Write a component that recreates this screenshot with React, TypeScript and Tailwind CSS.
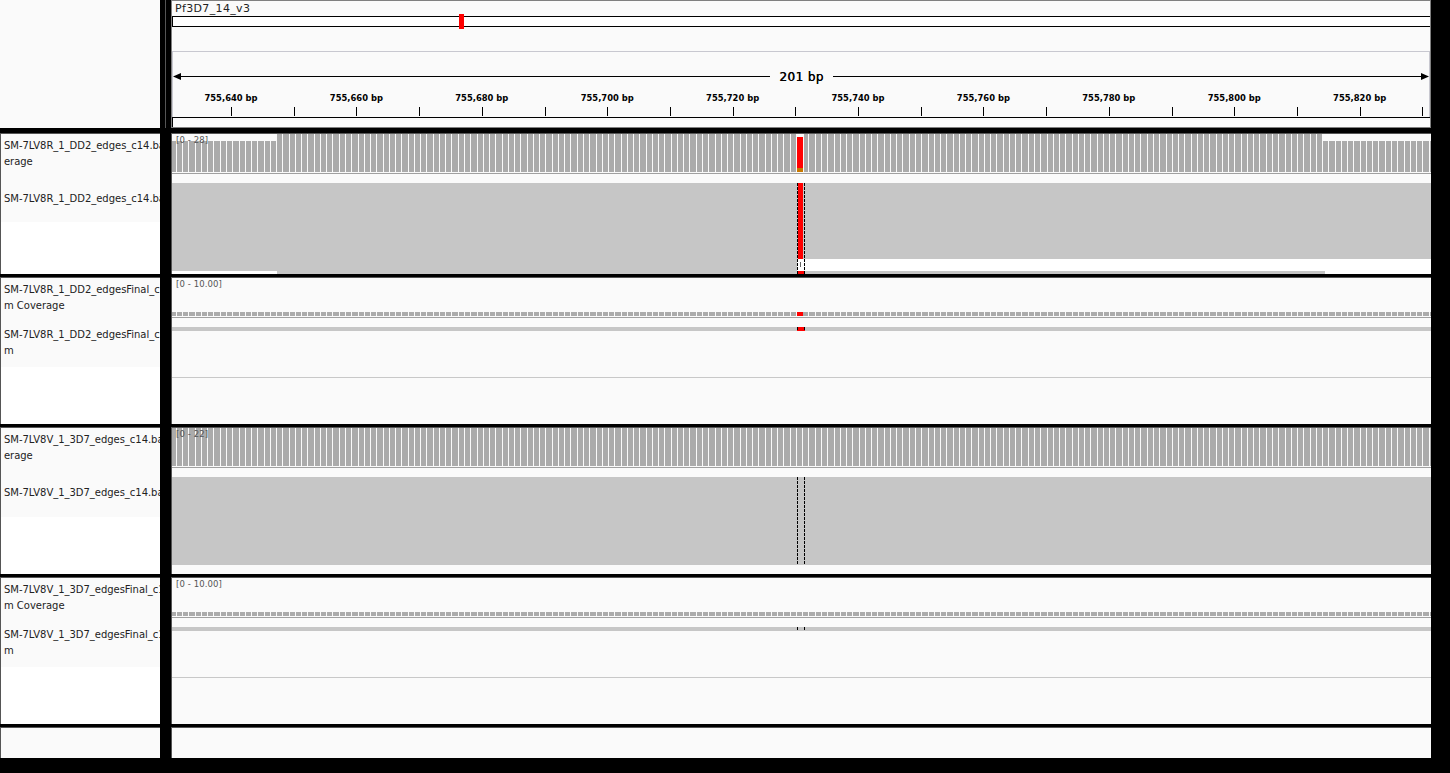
const FONT = "font-['DejaVu_Sans',sans-serif]";
const TRACK_W = 1259;
const BP_W = 1259 / 201;

const rulerLabels = ["755,640", "755,660", "755,680", "755,700", "755,720", "755,740", "755,760", "755,780", "755,800", "755,820"];
// ruler: one tick each 10 bp, label on every second tick
const ticks = Array.from({ length: 20 }, (_, i) => Math.round(59 + i * 62.7));
const barX = (i: number) => Math.round(-1.4 + i * BP_W);
const bars = Array.from({ length: 203 }, (_, i) => ({ x: barX(i), w: barX(i + 1) - barX(i) - 1 }));

function Dashes({ y1, y2 }: { y1: number; y2: number }) {
  return (
    <g stroke="#000" strokeDasharray="3 1">
      <line x1={625.5} x2={625.5} y1={y1} y2={y2} />
      <line x1={632.5} x2={632.5} y1={y1} y2={y2} />
    </g>
  );
}

// gray per-base coverage bars, top of each bar can depend on the position
function CoverageBars({ top, bottom, topFor }: { top: number; bottom: number; topFor?: (x: number) => number }) {
  return (
    <>
      {bars.map((b) => {
        const t = topFor ? topFor(b.x) : top;
        return <rect key={b.x} x={b.x} y={t} width={b.w} height={bottom - t} fill="#ababab" />;
      })}
    </>
  );
}

function Ruler() {
  return (
    <div className="relative h-[128px] w-[1259px] shrink-0 overflow-hidden box-border border-t border-b border-r border-[#808080] bg-[#fafafa]">
      <span className={`${FONT} absolute left-[3px] top-[1px] whitespace-nowrap text-[11px] leading-[13px] tracking-[0.35px] text-[#222]`}>Pf3D7_14_v3</span>
      <svg className="absolute left-0 top-[-1px]" width={TRACK_W} height={128} shapeRendering="crispEdges">
        <rect x={0.5} y={16.5} width={1258} height={10} fill="#fff" stroke="#000" />
        <rect x={287} y={14} width={5} height={15} fill="#f00" />
        <rect x={0} y={51} width={1259} height={1} fill="#c8c8d0" />
        <rect x={0} y={51} width={1} height={67} fill="#c8c8d0" />
        <rect x={1257} y={51} width={1} height={67} fill="#c8c8d0" />
        <rect x={2} y={76} width={1254} height={1} fill="#000" />
        <polygon points="1,76.5 9,73 9,80" fill="#000" shapeRendering="auto" />
        <polygon points="1257,76.5 1249,73 1249,80" fill="#000" shapeRendering="auto" />
        {ticks.map((x) => (
          <rect key={x} x={x} y={107} width={1} height={9} fill="#000" />
        ))}
        <rect x={0} y={117} width={1259} height={1} fill="#000" />
        <rect x={0} y={118} width={1} height={9} fill="#000" />
      </svg>
      <span className={`${FONT} absolute left-[598px] top-[68px] w-[63px] bg-[#fafafa] text-center text-[12px] leading-[16px] tracking-[0.4px] text-black [text-shadow:0.35px_0_0_#000]`}>201 bp</span>
      {rulerLabels.map((label, i) => (
        <span
          key={label}
          className={`${FONT} absolute top-[91px] -translate-x-1/2 whitespace-nowrap text-[8.4px] leading-[12px] font-bold text-black`}
          style={{ left: 59 + i * 125.4 }}
        >
          {label} bp
        </span>
      ))}
    </div>
  );
}

function DepthLabel({ text }: { text: string }) {
  return <span className={`${FONT} absolute left-[4px] top-[1px] whitespace-nowrap text-[8.5px] leading-[10px] tracking-[0.1px] text-[#555]`}>{text}</span>;
}

function Dd2Track() {
  return (
    <div className="relative h-full w-full">
      <svg className="block" width={TRACK_W} height={140} shapeRendering="crispEdges">
        <CoverageBars top={0} bottom={38} topFor={(x) => (x < 105 || x >= 1151 ? 7 : 0)} />
        <rect x={624} y={0} width={8} height={39} fill="#fafafa" />
        <rect x={625} y={3} width={6} height={31} fill="#f00" />
        <rect x={625} y={34} width={6} height={4} fill="#c87800" />
        <rect x={0} y={39} width={1259} height={1} fill="#a0a0a0" />

        <rect x={0} y={49} width={1259} height={76} fill="#c6c6c6" />
        <rect x={0} y={125} width={625} height={15} fill="#c6c6c6" />
        <rect x={0} y={137} width={105} height={3} fill="#fff" />
        <rect x={625} y={125} width={634} height={15} fill="#fff" />
        <rect x={633} y={137} width={520} height={3} fill="#c6c6c6" />
        <rect x={626} y={49} width={5} height={76} fill="#f00" />
        <rect x={628} y={128} width={1} height={5} fill="#666" />
        <rect x={626} y={137} width={6} height={3} fill="#f00" />
        <Dashes y1={49} y2={140} />
      </svg>
      <DepthLabel text="[0 - 28]" />
    </div>
  );
}

function FinalTrack({ red }: { red?: boolean }) {
  return (
    <div className="relative h-full w-full">
      <svg className="block" width={TRACK_W} height={146} shapeRendering="crispEdges">
        <CoverageBars top={34} bottom={38} />
        {red && <rect x={625} y={34} width={6} height={4} fill="#f00" />}
        <rect x={0} y={39} width={1259} height={1} fill="#a0a0a0" />
        <rect x={0} y={49} width={1259} height={4} fill="#c6c6c6" />
        {red && <rect x={625} y={49} width={8} height={4} fill="#f00" />}
        <Dashes y1={49} y2={53} />
        <rect x={0} y={99} width={1259} height={1} fill="#c8c8c8" />
      </svg>
      <DepthLabel text="[0 - 10.00]" />
    </div>
  );
}

function ThreeD7Track() {
  return (
    <div className="relative h-full w-full">
      <svg className="block" width={TRACK_W} height={146} shapeRendering="crispEdges">
        <CoverageBars top={0} bottom={38} />
        <rect x={0} y={39} width={1259} height={1} fill="#a0a0a0" />
        <rect x={0} y={49} width={1259} height={88} fill="#c6c6c6" />
        <Dashes y1={49} y2={137} />
      </svg>
      <DepthLabel text="[0 - 22]" />
    </div>
  );
}

function TrackLabel({ lines, height }: { lines: [string, number][]; height: number }) {
  return (
    <div className="h-full w-[160px] shrink-0 overflow-hidden box-border border-t border-l border-[#555] bg-white">
      <div className="overflow-hidden bg-[#fafafa] pl-[3px] pt-[4px]" style={{ height }}>
        {lines.map(([text, gap]) => (
          <div key={text + gap} className={`${FONT} w-[156px] overflow-hidden whitespace-nowrap text-[10px] leading-[16px] tracking-[-0.03px] text-[#222]`} style={{ marginBottom: gap }}>
            {text}
          </div>
        ))}
      </div>
    </div>
  );
}

function Row({ height, label, children }: { height: number; label: React.ReactNode; children?: React.ReactNode }) {
  return (
    <div className="mt-[3px] flex w-[1431px]" style={{ height }}>
      {label}
      <div className="h-full w-[11px] shrink-0 bg-black" />
      <div className="h-full w-[1px] shrink-0 bg-[#555]" />
      <div className="h-full w-[1259px] shrink-0 overflow-hidden box-border border-t border-[#555] bg-[#fafafa]">{children}</div>
    </div>
  );
}

export default function App() {
  return (
    <div className="h-[773px] w-[1450px] overflow-hidden bg-black">
      <div className="flex h-[128px]">
        <div className="h-full w-[160px] shrink-0 bg-[#fafafa]" />
        <div className="h-full w-[5px] shrink-0 bg-black" />
        <div className="h-full w-[1px] shrink-0 bg-[#555]" />
        <div className="h-full w-[5px] shrink-0 bg-black" />
        <div className="h-full w-[1px] shrink-0 bg-[#808080]" />
        <Ruler />
      </div>
      <div className="h-[2px]" />
      <Row
        height={141}
        label={<TrackLabel height={88} lines={[["SM-7LV8R_1_DD2_edges_c14.ba", 0], ["erage", 21], ["SM-7LV8R_1_DD2_edges_c14.ba", 0]]} />}
      >
        <Dd2Track />
      </Row>
      <Row
        height={147}
        label={<TrackLabel height={89} lines={[["SM-7LV8R_1_DD2_edgesFinal_c1", 0], ["m Coverage", 13], ["SM-7LV8R_1_DD2_edgesFinal_c1", 0], ["m", 0]]} />}
      >
        <FinalTrack red />
      </Row>
      <Row
        height={147}
        label={<TrackLabel height={89} lines={[["SM-7LV8V_1_3D7_edges_c14.ba", 0], ["erage", 21], ["SM-7LV8V_1_3D7_edges_c14.ba", 0]]} />}
      >
        <ThreeD7Track />
      </Row>
      <Row
        height={147}
        label={<TrackLabel height={89} lines={[["SM-7LV8V_1_3D7_edgesFinal_c1", 0], ["m Coverage", 13], ["SM-7LV8V_1_3D7_edgesFinal_c1", 0], ["m", 0]]} />}
      >
        <FinalTrack />
      </Row>
      <Row height={31} label={<TrackLabel height={30} lines={[]} />} />
    </div>
  );
}
